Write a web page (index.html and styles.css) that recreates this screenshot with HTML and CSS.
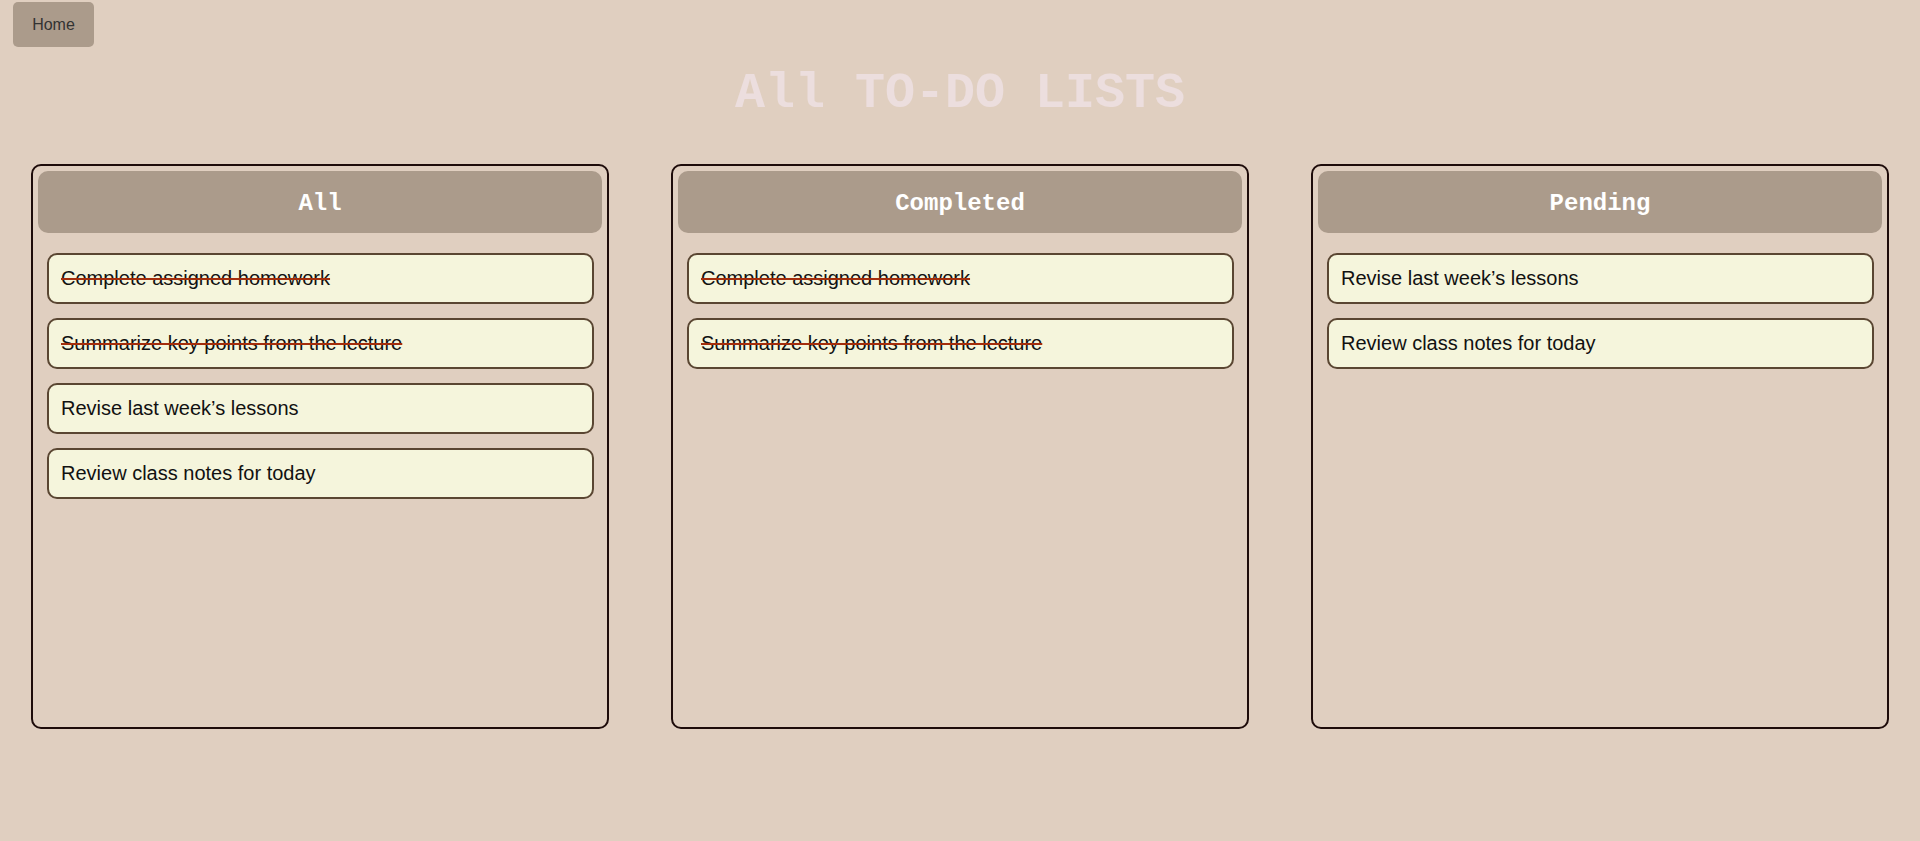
FILE: index.html
```html
<!DOCTYPE html>
<html lang="en">
<head>
<meta charset="utf-8">
<title>All TO-DO LISTS</title>
<link rel="stylesheet" href="styles.css">
</head>
<body>
<nav class="nav">
  <button class="home-btn" type="button">Home</button>
</nav>
<h1 class="title">All TO-DO LISTS</h1>
<main class="board">
  <section class="list">
    <h2 class="list-head">All</h2>
    <ul class="items">
      <li class="item done">Complete assigned homework</li>
      <li class="item done">Summarize key points from the lecture</li>
      <li class="item">Revise last week’s lessons</li>
      <li class="item">Review class notes for today</li>
    </ul>
  </section>
  <section class="list">
    <h2 class="list-head">Completed</h2>
    <ul class="items">
      <li class="item done">Complete assigned homework</li>
      <li class="item done">Summarize key points from the lecture</li>
    </ul>
  </section>
  <section class="list">
    <h2 class="list-head">Pending</h2>
    <ul class="items">
      <li class="item">Revise last week’s lessons</li>
      <li class="item">Review class notes for today</li>
    </ul>
  </section>
</main>
</body>
</html>
```
FILE: styles.css
```css
* { box-sizing: border-box; }

html, body {
  margin: 0;
  padding: 0;
  background: #e0cfc0;
  font-family: "Liberation Sans", Arial, sans-serif;
}

.nav {
  padding: 2px 0 0 13px;
  display: flex;
}

.home-btn {
  font-family: "Liberation Sans", Arial, sans-serif;
  font-size: 16px;
  line-height: 19px;
  color: #333333;
  background: #ab9b8b;
  border: none;
  border-radius: 5px;
  padding: 13px 19px;
  height: 45px;
  width: 81px;
  cursor: pointer;
}

.title {
  margin: 18px 0 42px;
  text-align: center;
  font-family: "Liberation Mono", "Courier New", monospace;
  font-weight: bold;
  font-size: 50px;
  line-height: 57px;
  color: #ecdede;
}

.board {
  display: flex;
  justify-content: space-around;
}

.list {
  width: 578px;
  height: 565px;
  border: 2px solid #1e0c0a;
  border-radius: 10px;
  padding: 5px;
}

.list-head {
  margin: 0;
  background: #ab9b8b;
  border-radius: 10px;
  height: 62px;
  display: flex;
  align-items: center;
  justify-content: center;
  padding-top: 2px;
  font-family: "Liberation Mono", "Courier New", monospace;
  font-weight: bold;
  font-size: 24px;
  color: #ffffff;
}

.items {
  list-style: none;
  margin: 20px 0 0;
  padding: 0 8px 0 9px;
  display: flex;
  flex-direction: column;
  gap: 14px;
}

.item {
  background: #f5f5dc;
  border: 2px solid #5a4632;
  border-radius: 10px;
  padding: 12px 12px;
  font-size: 20px;
  line-height: 23px;
  color: #111111;
}

.item.done {
  text-decoration: line-through;
  text-decoration-color: #a32d0c;
  text-decoration-thickness: 2px;
}
```
